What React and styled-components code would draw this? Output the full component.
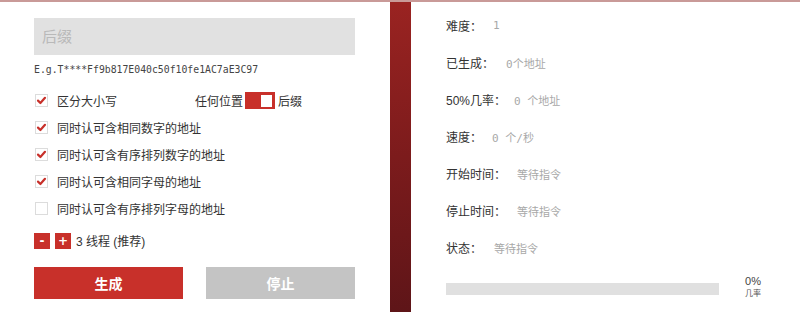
import React from 'react'
import styled, { createGlobalStyle } from 'styled-components';

const GlobalStyle = createGlobalStyle`
    html, body {
        margin: 0;
        padding: 0;
        background: #fff;
    }
    body {
        font-family: "Liberation Sans", "Noto Sans CJK SC", sans-serif;
    }
`;

const options = [
    { label: '同时认可含相同数字的地址', checked: true },
    { label: '同时认可含有序排列数字的地址', checked: true },
    { label: '同时认可含相同字母的地址', checked: true },
    { label: '同时认可含有序排列字母的地址', checked: false },
];

const stats = [
    { label: '难度：', value: '1', gap: 11 },
    { label: '已生成：', value: '0个地址', gap: 12 },
    { label: '50%几率：', value: '0 个地址', gap: 8 },
    { label: '速度：', value: '0 个/秒', gap: 10 },
    { label: '开始时间：', value: '等待指令', gap: 11 },
    { label: '停止时间：', value: '等待指令', gap: 11 },
    { label: '状态：', value: '等待指令', gap: 12 },
];

function Check({ checked }) {
    return (
        <CheckBox>
            {checked && (
                <svg width="11" height="11" viewBox="0 0 11 11">
                    <path d="M2 5.6 L4.4 8 L9 2.8" fill="none" stroke="#c8302a" strokeWidth="2.2" strokeLinecap="round" strokeLinejoin="round" />
                </svg>
            )}
        </CheckBox>
    )
}

function App() {
  return (
    <PageStyled>
        <GlobalStyle />
        <div className='left'>
            <SuffixInput placeholder='后缀' />
            <Example>E.g.T****Ff9b817E040c50f10fe1AC7aE3C97</Example>
            <div className='options'>
                <OptionRow>
                    <Check checked />
                    <span>区分大小写</span>
                    <div className='position'>
                        <span>任何位置</span>
                        <Toggle><span /></Toggle>
                        <span>后缀</span>
                    </div>
                </OptionRow>
                {options.map((opt) => (
                    <OptionRow key={opt.label}>
                        <Check checked={opt.checked} />
                        <span>{opt.label}</span>
                    </OptionRow>
                ))}
            </div>
            <ThreadRow>
                <StepButton>-</StepButton>
                <StepButton>+</StepButton>
                <span>3 线程 (推荐)</span>
            </ThreadRow>
            <div className='actions'>
                <ActionButton $variant='primary'>生成</ActionButton>
                <ActionButton $variant='disabled'>停止</ActionButton>
            </div>
        </div>
        <Divider />
        <div className='right'>
            {stats.map((s) => (
                <StatRow key={s.label}>
                    <span className='label'>{s.label}</span>
                    <span className='value' style={{ marginLeft: s.gap }}>{s.value}</span>
                </StatRow>
            ))}
            <ProgressRow>
                <div className='track'><div className='fill' style={{ width: '0%' }} /></div>
                <div className='percent'>
                    <span>0%</span>
                    <small>几率</small>
                </div>
            </ProgressRow>
        </div>
    </PageStyled>
  )
}

const PageStyled = styled.div`
    display: flex;
    width: 800px;
    height: 312px;
    box-sizing: border-box;
    border-top: 2px solid #c99a98;
    overflow: hidden;
    color: #333;
    .left{
        width: 390px;
        box-sizing: border-box;
        padding: 16px 35px 0 34px;
        display: flex;
        flex-direction: column;
    }
    .options{
        margin-top: 11px;
        display: flex;
        flex-direction: column;
    }
    .position{
        display: flex;
        align-items: center;
        margin-left: 78px;
        gap: 2px;
    }
    .actions{
        display: flex;
        justify-content: space-between;
        margin-top: 18px;
    }
    .right{
        flex: 1;
        padding: 5px 0 0 35px;
        display: flex;
        flex-direction: column;
    }
`;

const SuffixInput = styled.input`
    height: 37px;
    box-sizing: border-box;
    border: none;
    outline: none;
    background: #e1e1e1;
    padding: 0 8px;
    font-family: "Liberation Sans", "Noto Sans CJK SC", sans-serif;
    font-size: 15px;
    color: #555;
    &::placeholder{
        color: #b9b9b9;
    }
`;

const Example = styled.div`
    margin-top: 9px;
    font-family: "DejaVu Sans Mono", monospace;
    font-size: 9.8px;
    line-height: 12px;
    color: #444;
`;

const OptionRow = styled.div`
    display: flex;
    align-items: center;
    height: 27px;
    font-size: 12px;
    color: #333;
`;

const CheckBox = styled.span`
    width: 13px;
    height: 13px;
    box-sizing: border-box;
    border: 1px solid #dcdcdc;
    background: #fff;
    margin: 0 9px 0 1px;
    display: flex;
    align-items: center;
    justify-content: center;
`;

const Toggle = styled.span`
    width: 30px;
    height: 17px;
    background: #c8302a;
    display: flex;
    align-items: center;
    justify-content: flex-end;
    padding-right: 3px;
    margin-right: 1px;
    box-sizing: border-box;
    span{
        width: 11px;
        height: 12px;
        background: #fff;
    }
`;

const ThreadRow = styled.div`
    display: flex;
    align-items: center;
    gap: 5px;
    margin-top: 10px;
    font-size: 12px;
    color: #333;
`;

const StepButton = styled.button`
    width: 16px;
    height: 16px;
    padding: 0;
    border: none;
    background: #c8302a;
    color: #fff;
    font-family: "DejaVu Sans", sans-serif;
    font-size: 12px;
    font-weight: bold;
    line-height: 16px;
    display: flex;
    align-items: center;
    justify-content: center;
`;

const ActionButton = styled.button`
    width: 149px;
    height: 32px;
    border: none;
    padding: 0;
    font-family: "Liberation Sans", "Noto Sans CJK SC", sans-serif;
    font-size: 14px;
    font-weight: bold;
    color: #fff;
    background: ${props => props.$variant === 'primary' ? '#c8302a' : '#c4c4c4'};
`;

const Divider = styled.div`
    width: 21px;
    background: linear-gradient(180deg, #9a2321 0%, #7c1b1c 50%, #5e1518 100%);
`;

const StatRow = styled.div`
    display: flex;
    align-items: center;
    height: 37px;
    font-size: 12px;
    .label{
        color: #333;
    }
    .value{
        font-family: "DejaVu Sans Mono", "Noto Sans CJK SC", monospace;
        font-size: 11px;
        color: #a8a8a8;
    }
`;

const ProgressRow = styled.div`
    display: flex;
    align-items: center;
    margin-top: 8px;
    .track{
        width: 273px;
        height: 12px;
        background: #e0e0e0;
        margin-top: 3px;
    }
    .fill{
        height: 100%;
        background: #c8302a;
    }
    .percent{
        margin-left: 26px;
        display: flex;
        flex-direction: column;
        align-items: center;
        color: #444;
        span{
            font-size: 11px;
            line-height: 14px;
        }
        small{
            font-size: 8px;
            line-height: 12px;
            color: #555;
        }
    }
`;

export default App
